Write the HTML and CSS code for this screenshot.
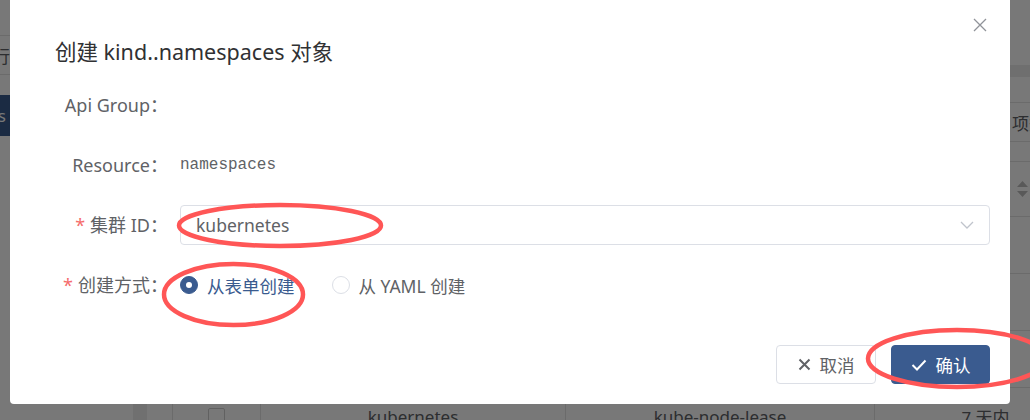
FILE: index.html
```html
<!DOCTYPE html>
<html lang="zh-CN">
<head>
    <meta charset="UTF-8">
    <meta name="viewport" content="width=device-width, initial-scale=1.0">
    <title>创建 kind..namespaces 对象</title>
    <link rel="stylesheet" href="styles.css">
</head>
<body>
    <!-- page behind the dialog -->
    <div class="page">
        <div class="side">
            <div class="side-top"></div>
            <div class="side-row"><span class="side-text">运行</span></div>
            <div class="side-active"><span class="side-text active-text">Namespaces</span></div>
        </div>
        <div class="main">
            <div class="main-top"></div>
            <div class="main-band"></div>
            <div class="main-row"></div>
            <div class="main-tools"><span class="tools-text">项签</span></div>
            <div class="main-gap"></div>
            <div class="table-head">
                <svg class="sort" width="11" height="16" viewBox="0 0 11 16"><path d="M5.5 0L11 6H0z M5.5 16L0 10h11z" fill="#bdbdbd"/></svg>
            </div>
            <div class="table-row"></div>
            <div class="table-row"></div>
            <div class="table-row"></div>
            <div class="table-row cells">
                <span class="cell"><i class="check-box"></i></span>
                <span class="cell">kubernetes</span>
                <span class="cell">kube-node-lease</span>
                <span class="cell">7 天内</span>
            </div>
        </div>
    </div>

    <!-- Dialog -->
    <div class="mask">
        <div class="dialog">
            <div class="dialog-header">
                <span class="dialog-title">创建 kind..namespaces 对象</span>
                <span class="dialog-close">
                    <svg width="14" height="14" viewBox="0 0 14 14"><path d="M1 1L13 13M13 1L1 13" stroke="#909399" stroke-width="1.3" fill="none"/></svg>
                </span>
            </div>

            <div class="dialog-body">
                <div class="form-item">
                    <label class="form-label">Api Group：</label>
                    <div class="form-content"></div>
                </div>
                <div class="form-item">
                    <label class="form-label">Resource：</label>
                    <div class="form-content"><span class="mono">namespaces</span></div>
                </div>
                <div class="form-item">
                    <label class="form-label"><span class="required">*</span>集群 ID：</label>
                    <div class="form-content">
                        <div class="select">
                            <span>kubernetes</span>
                            <svg width="14" height="8" viewBox="0 0 14 8"><path d="M1 1l6 6 6-6" fill="none" stroke="#c0c4cc" stroke-width="1.3"/></svg>
                        </div>
                    </div>
                </div>
                <div class="form-item">
                    <label class="form-label"><span class="required">*</span>创建方式：</label>
                    <div class="form-content">
                        <span class="radio checked"><i class="radio-dot"></i>从表单创建</span>
                        <span class="radio"><i class="radio-dot"></i>从 YAML 创建</span>
                    </div>
                </div>
            </div>

            <div class="dialog-footer">
                <button class="btn">
                    <svg width="13" height="13" viewBox="0 0 13 13"><path d="M1.5 1.5l10 10M11.5 1.5l-10 10" stroke="#606266" stroke-width="2" fill="none"/></svg>
                    取消
                </button>
                <button class="btn btn-primary">
                    <svg width="16" height="12" viewBox="0 0 16 12"><path d="M1.5 6l4.5 4.5L14.5 1.5" fill="none" stroke="#fff" stroke-width="2"/></svg>
                    确认
                </button>
            </div>
        </div>
    </div>

    <!-- red annotation marks -->
    <svg class="marks" width="1030" height="420" viewBox="0 0 1030 420">
        <ellipse cx="280" cy="225.5" rx="101" ry="20.5"/>
        <ellipse cx="233.5" cy="294.5" rx="69.5" ry="30.5"/>
        <ellipse cx="957" cy="358.5" rx="89" ry="28.5"/>
    </svg>
</body>
</html>
```

FILE: styles.css
```css
* {
    box-sizing: border-box;
}

html, body {
    margin: 0;
    padding: 0;
    height: 100%;
}

body {
    font-family: "Noto Sans", "Noto Sans CJK SC", sans-serif;
    background-color: #fff;
    color: #606266;
    overflow: hidden;
}

/* page behind */
.page {
    display: flex;
    height: 100%;
    font-size: 17px;
    color: #606266;
}

.side {
    width: 147px;
    flex-shrink: 0;
    border-right: 14px solid #eeeeee;
}

.side-top {
    height: 36px;
    border-bottom: 1px solid #e4e4e4;
}

.side-row {
    height: 39px;
    border-bottom: 1px solid #e4e4e4;
    display: flex;
    align-items: center;
    overflow: hidden;
}

.side-text {
    margin-left: -24px;
    white-space: nowrap;
}

.side-active {
    margin-top: 20px;
    height: 41px;
    background-color: #3a5b8f;
    color: #fff;
    display: flex;
    align-items: center;
    overflow: hidden;
}

.active-text {
    margin-left: -96px;
}

.main {
    flex: 1;
    min-width: 0;
    overflow: hidden;
}

.main-top {
    height: 65px;
}

.main-band {
    height: 12px;
    background-color: #ececec;
}

.main-row {
    height: 26px;
    border-bottom: 1px solid #e4e4e4;
}

.main-tools {
    height: 39px;
    border-bottom: 1px solid #e4e4e4;
    display: flex;
    justify-content: flex-end;
    align-items: center;
}

.tools-text {
    margin-right: -16px;
    white-space: nowrap;
}

.main-gap {
    height: 20px;
    border-bottom: 1px solid #e4e4e4;
}

.table-head {
    height: 55px;
    border-bottom: 1px solid #e4e4e4;
    display: flex;
    justify-content: flex-end;
    align-items: center;
    padding-right: 2px;
}

.table-row {
    height: 57px;
    border-bottom: 1px solid #e4e4e4;
}

.cells {
    display: grid;
    grid-template-columns: 88px 305px 309px 222px;
    margin-left: 25px;
    width: 924px;
}

.cell {
    display: flex;
    align-items: center;
    justify-content: center;
    border-left: 1px solid #e4e4e4;
    white-space: nowrap;
}

.check-box {
    width: 17px;
    height: 17px;
    border: 1px solid #cfcfcf;
    border-radius: 2px;
}

/* dialog */
.mask {
    position: fixed;
    top: 0;
    left: 0;
    width: 100%;
    height: 100%;
    background-color: rgba(0, 0, 0, 0.53);
    padding: 0 20px 0 10px;
}

.dialog {
    margin-top: -10px;
    height: 414px;
    background-color: #fff;
    border-radius: 4px;
}

.dialog-header {
    display: flex;
    justify-content: space-between;
    align-items: flex-start;
    padding: 28px 23px 0 45px;
}

.dialog-title {
    margin-top: 19px;
    font-size: 21.5px;
    line-height: 30px;
    color: #303133;
}

.dialog-close {
    display: block;
    width: 14px;
    height: 14px;
}

.dialog-close svg {
    display: block;
}

.dialog-body {
    padding: 18px 20px 0 20px;
}

.form-item {
    display: flex;
    align-items: center;
    height: 40px;
    margin-bottom: 20px;
}

.form-label {
    width: 150px;
    flex-shrink: 0;
    padding-right: 12px;
    text-align: right;
    font-size: 18px;
    line-height: 24px;
    color: #606266;
}

.required {
    color: #f56c6c;
    margin-right: 5px;
}

.form-content {
    flex: 1;
    display: flex;
    align-items: center;
}

.mono {
    font-family: "Liberation Mono", monospace;
    font-size: 16px;
    color: #606266;
}

.select {
    flex: 1;
    height: 40px;
    border: 1px solid #dcdfe6;
    border-radius: 4px;
    padding: 0 15px 0 15px;
    display: flex;
    align-items: center;
    justify-content: space-between;
    font-size: 17.5px;
    color: #606266;
}

.radio {
    display: flex;
    align-items: center;
    gap: 9px;
    margin-right: 37px;
    font-size: 17.5px;
    color: #606266;
}

.radio-dot {
    width: 18px;
    height: 18px;
    border: 1px solid #dcdfe6;
    border-radius: 50%;
    display: flex;
    align-items: center;
    justify-content: center;
}

.radio.checked {
    color: #3a5b8f;
}

.radio.checked .radio-dot {
    background-color: #3a5b8f;
    border-color: #3a5b8f;
}

.radio.checked .radio-dot::after {
    content: "";
    width: 6px;
    height: 6px;
    border-radius: 50%;
    background-color: #fff;
}

.dialog-footer {
    display: flex;
    justify-content: flex-end;
    gap: 15px;
    padding: 20px 20px 0 20px;
}

.btn {
    width: 100px;
    height: 39px;
    border: 1px solid #dcdfe6;
    border-radius: 4px;
    background-color: #fff;
    color: #606266;
    font-family: inherit;
    font-size: 17.5px;
    display: inline-flex;
    align-items: center;
    justify-content: center;
    gap: 9px;
    padding: 0;
}

.btn-primary {
    width: 99px;
    background-color: #3a5b8f;
    border-color: #3a5b8f;
    color: #fff;
}

/* annotations */
.marks {
    position: fixed;
    top: 0;
    left: 0;
    pointer-events: none;
}

.marks ellipse {
    fill: none;
    stroke: #ff5656;
    stroke-width: 4.5;
}
```
